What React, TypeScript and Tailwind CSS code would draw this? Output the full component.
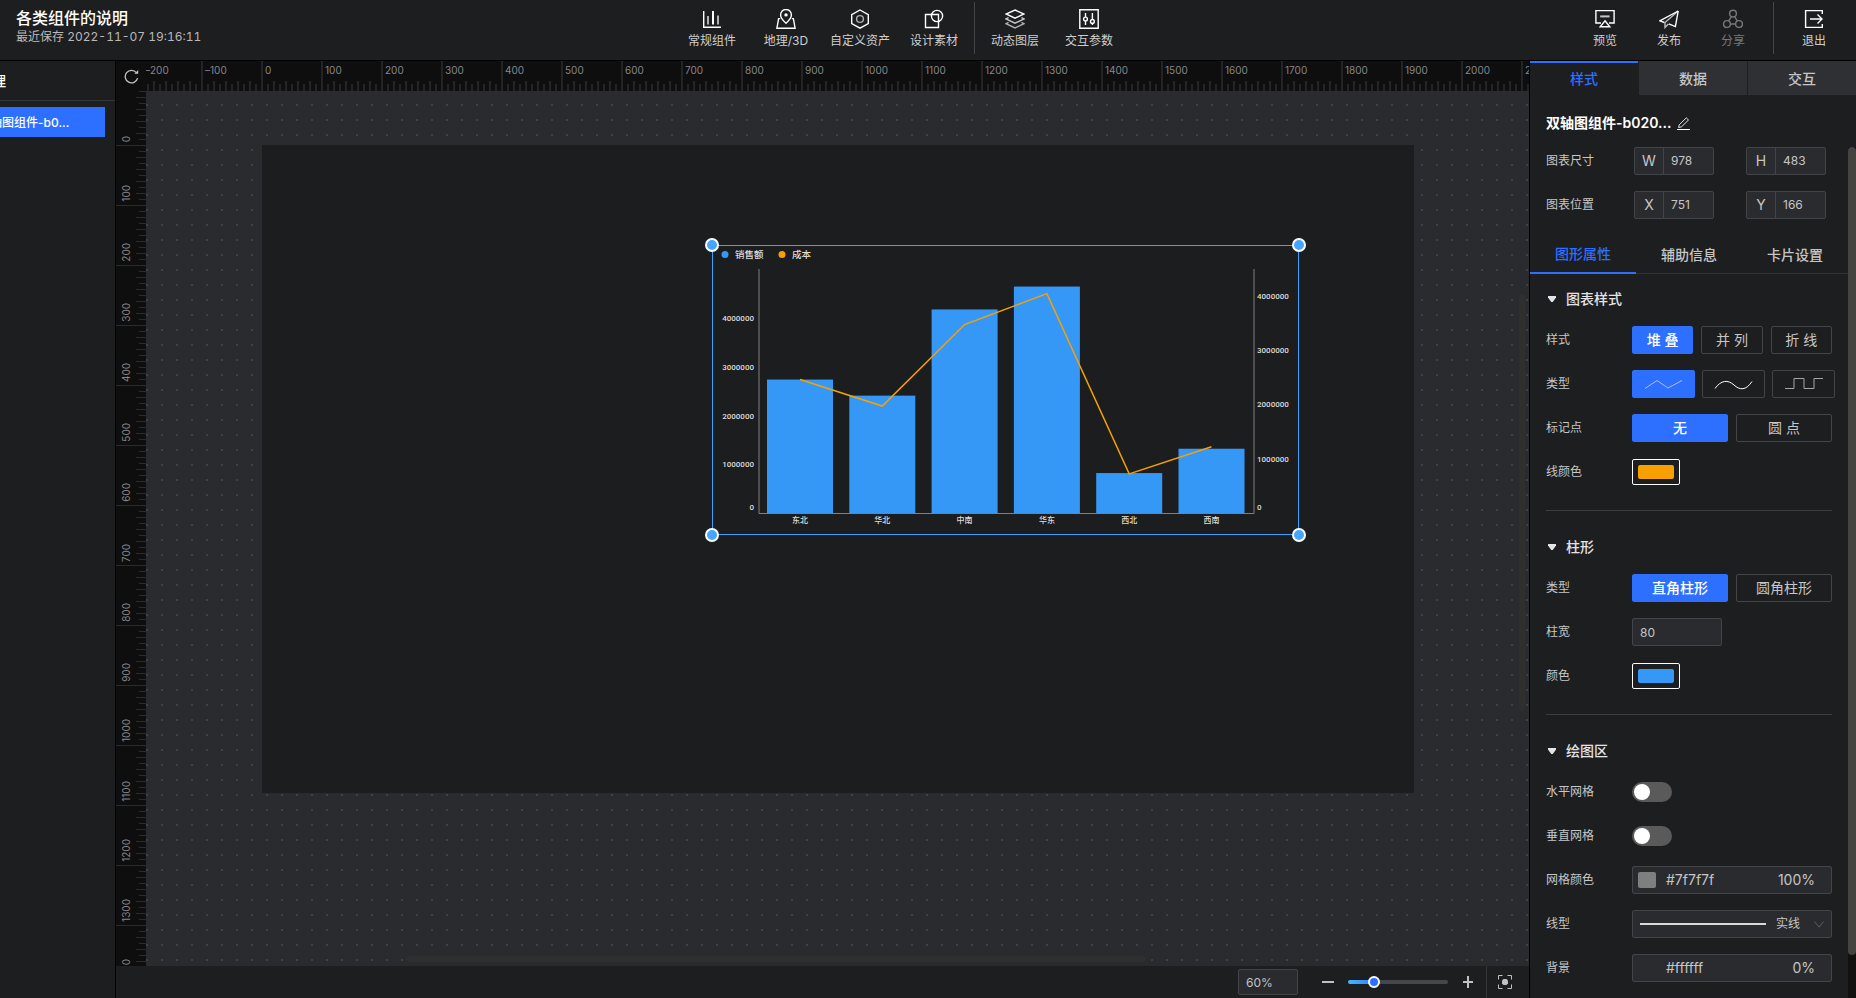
import { useState } from 'react';
import type { ReactNode } from 'react';
import clsx from 'clsx';

const CATEGORIES = ['东北', '华北', '中南', '华东', '西北', '西南'];
const SALES = [2740000, 2410000, 4180000, 4650000, 820000, 1320000];
const COST = [2460000, 1970000, 3470000, 4040000, 720000, 1220000];

/* ---------- icons ---------- */

const Icon = ({ children }: { children: ReactNode }) => (
    <svg width="20" height="20" viewBox="0 0 20 20" fill="none" stroke="currentColor" strokeWidth="1.4" aria-hidden="true">
        {children}
    </svg>
);

const BarsIcon = () => (
    <Icon>
        <path d="M1.7 2v16.3H19" />
        <path d="M6 7v8.5M16 6.5v9" strokeOpacity="0.65" strokeWidth="2" />
        <path d="M11 2v13.5" strokeWidth="2" />
    </Icon>
);

const MapIcon = () => (
    <Icon>
        <path d="M10 14.2C6.5 11 4.6 8.6 4.6 5.9a5.4 5.4 0 0 1 10.8 0c0 2.7-1.9 5.1-5.4 8.3z" />
        <circle cx="10" cy="5.9" r="1.7" fill="currentColor" stroke="none" />
        <path d="M4.2 9.6H2.6L.9 19.2h18.2l-1.7-9.6h-1.6" />
    </Icon>
);

const HexIcon = () => (
    <Icon>
        <path d="M10 1l8.3 4.6v9L10 19.2l-8.3-4.6v-9z" />
        <circle cx="10" cy="10" r="3.4" strokeOpacity="0.65" />
    </Icon>
);

const ShapesIcon = () => (
    <Icon>
        <path d="M1.5 5.5h13v13h-13z" />
        <circle cx="13" cy="7" r="5.6" />
    </Icon>
);

const LayersIcon = () => (
    <Icon>
        <path d="M10 1l9 4-9 4.2L1 5z" />
        <path d="M3.6 8.6L1 9.9l9 4.3 9-4.3-2.6-1.3" strokeOpacity="0.75" />
        <path d="M3.6 13.4L1 14.7 10 19l9-4.3-2.6-1.3" strokeOpacity="0.65" />
    </Icon>
);

const SlidersIcon = () => (
    <Icon>
        <path d="M.8.8h18.4v18.4H.8z" />
        <path d="M6.5 4v4M6.5 12v4M13.4 4v6.5M13.4 14.5V16" />
        <circle cx="6.5" cy="10" r="1.9" />
        <circle cx="13.4" cy="12.4" r="1.9" />
    </Icon>
);

const PreviewIcon = () => (
    <Icon>
        <path d="M6 14H.9V1.6h18.2V14H14" />
        <path d="M5.2 7.4h9.4" strokeOpacity="0.75" strokeWidth="2" />
        <path d="M10 11.8l4.8 6H5.2z" />
    </Icon>
);

const PlaneIcon = () => (
    <Icon>
        <path d="M19.2 2L.8 11.8l4.6 1.7M19.2 2l-2.8 15.6-6.6-2.8" />
        <path d="M19.2 2L6 13.500v5l3.400-3.400" strokeOpacity="0.7" />
    </Icon>
);

const ShareIcon = () => (
    <Icon>
        <circle cx="10" cy="4.6" r="3.4" />
        <circle cx="4" cy="15" r="3.4" />
        <circle cx="16" cy="15" r="3.4" />
        <path d="M8.3 7.8l-2.6 4.1M11.7 7.8l2.6 4.1M7.4 15h5.2" />
    </Icon>
);

const ExitIcon = () => (
    <Icon>
        <path d="M18.3 5V1.6H1.6v16.8h16.7V15" />
        <path d="M6 10h12M13.5 5.6L18 10l-4.5 4.4" />
    </Icon>
);

/* ---------- header ---------- */

const TOOLS = [
    { label: '常规组件', icon: <BarsIcon /> },
    { label: '地理/3D', icon: <MapIcon /> },
    { label: '自定义资产', icon: <HexIcon /> },
    { label: '设计素材', icon: <ShapesIcon /> },
];

const TOOLS_EXTRA = [
    { label: '动态图层', icon: <LayersIcon /> },
    { label: '交互参数', icon: <SlidersIcon /> },
];

type ToolProps = { label: string; icon: ReactNode; narrow?: boolean; disabled?: boolean };

const ToolButton = ({ label, icon, narrow, disabled }: ToolProps) => (
    <button
        disabled={disabled}
        className={clsx(
            'flex flex-col items-center gap-1 pt-[9px] text-xs leading-4',
            narrow ? 'w-16' : 'w-[74px]',
            disabled ? 'text-[#77787a]' : 'text-white'
        )}
    >
        {icon}
        <span className={clsx('whitespace-nowrap', !disabled && 'text-[#cececf]')}>{label}</span>
    </button>
);

const Header = () => (
    <header className="flex h-[61px] shrink-0 justify-between border-b border-black bg-[#1d1e20] pr-[10px] pl-4">
        <div className="w-[212px] pt-2">
            <h1 className="text-base leading-5 font-medium text-white">各类组件的说明</h1>
            <p className="mt-px text-xs leading-4 text-[#b9b9ba] tabular-nums">最近保存 2022-11-07 19:16:11</p>
        </div>
        <nav className="flex">
            {TOOLS.map((t) => <ToolButton key={t.label} {...t} />)}
            <div className="mx-[3px] mt-[2px] mb-[6px] w-px bg-[#434447]"></div>
            {TOOLS_EXTRA.map((t) => <ToolButton key={t.label} {...t} />)}
        </nav>
        <div className="flex">
            <ToolButton label="预览" icon={<PreviewIcon />} narrow />
            <ToolButton label="发布" icon={<PlaneIcon />} narrow />
            <ToolButton label="分享" icon={<ShareIcon />} narrow disabled />
            <div className="mx-2 mt-[2px] mb-[6px] w-px bg-[#434447]"></div>
            <ToolButton label="退出" icon={<ExitIcon />} narrow />
        </div>
    </header>
);

/* ---------- layer list ---------- */

const LayerPanel = () => (
    <aside className="w-[116px] shrink-0 overflow-hidden border-r border-black bg-[#1d1e20]">
        <div className="-ml-[84px] w-[199px]">
            <h2 className="flex h-10 items-center border-b border-[#35363a] pl-[34px] text-sm font-medium text-white">图层管理</h2>
            <button className="mt-[6px] flex h-[30px] w-[189px] items-center bg-[#2d70ff] pt-[2px] pl-[62px] text-xs font-medium whitespace-nowrap text-white">
                双轴图组件-b0...
            </button>
        </div>
    </aside>
);

/* ---------- rulers ---------- */

const MINOR = [1, 2, 3, 4, 5, 6, 7, 8, 9];

const TopRuler = () => (
    <div className="h-[30px] min-w-0 flex-1 overflow-hidden">
        <div className="-ml-[5px] flex">
            {Array.from({ length: 24 }, (_, i) => (i - 2) * 100).map((v) => (
                <div key={v} className="flex h-[30px] w-[60px] shrink-0 flex-col justify-between border-l-2 border-[#242426]">
                    <span className="pt-px pl-[2px] text-[10px] leading-4 text-[#85868b]">{v < 0 ? `–${-v}` : v}</span>
                    <div className="flex items-end pl-1">
                        {MINOR.map((m) => (
                            <span key={m} className={clsx('w-[6px] border-l-2 border-[#242426]', m % 2 ? 'h-[7px]' : 'h-[10px]')}></span>
                        ))}
                    </div>
                </div>
            ))}
        </div>
    </div>
);

const SideRuler = () => (
    <div className="w-[30px] shrink-0 overflow-hidden">
        <div className="-mt-[6px]">
            {Array.from({ length: 15 }, (_, i) => i * 100).map((v) => (
                <div key={v} className="flex h-[60px] items-end justify-between border-t border-[#2b2b2d]">
                    <span className="rotate-180 pt-[3px] pr-[2px] text-[10px] leading-4 text-[#85868b] [writing-mode:vertical-rl]">{v}</span>
                    <div className="flex flex-col items-end">
                        {MINOR.map((m) => (
                            <span key={m} className={clsx('h-[6px] border-t border-[#2b2b2d]', m % 2 ? 'w-[7px]' : 'w-[10px]')}></span>
                        ))}
                    </div>
                </div>
            ))}
        </div>
    </div>
);

/* ---------- chart ---------- */

const BASE = 268;
const LEFT_UNIT = 48.7 / 1000000;
const RIGHT_UNIT = 54.3 / 1000000;
const barX = (i: number) => 55 + i * 82.3;
const TICKS = [0, 1000000, 2000000, 3000000, 4000000];

const DualAxisChart = () => {
    const line = COST.map((v, i) => `${barX(i) + 33},${BASE - v * RIGHT_UNIT}`).join(' ');
    return (
        <svg
            viewBox="0 0 587 290"
            className="block size-full font-['Roboto','Noto_Sans_CJK_SC',sans-serif]"
            fill="#dcdcdc"
            fontSize="8"
            fontWeight="500"
            role="img"
            aria-label="销售额 成本"
        >
            <circle cx="13" cy="9.5" r="3.5" fill="#3598f7" />
            <text x="23" y="13" fontSize="9.5">销售额</text>
            <circle cx="70" cy="9.5" r="3.5" fill="#f8a000" />
            <text x="80" y="13" fontSize="9.5">成本</text>

            {SALES.map((v, i) => (
                <rect key={i} x={barX(i)} y={BASE - v * LEFT_UNIT} width="66" height={v * LEFT_UNIT} fill="#3598f7" />
            ))}
            <path d="M47 24V268.5H542V24" fill="none" stroke="#808080" />
            <polyline points={line} fill="none" stroke="#f8a000" strokeWidth="1.5" />

            {TICKS.map((t) => (
                <text key={t} x="42" y={t ? BASE - t * LEFT_UNIT + 3 : 265} textAnchor="end">{t}</text>
            ))}
            {TICKS.map((t) => (
                <text key={t} x="545" y={t ? BASE - t * RIGHT_UNIT + 3 : 265}>{t}</text>
            ))}
            {CATEGORIES.map((c, i) => (
                <text key={c} x={barX(i) + 33} y="278" textAnchor="middle">{c}</text>
            ))}
        </svg>
    );
};

const HANDLE = 'absolute size-[14px] rounded-full border-2 border-white bg-[#45a5ff]';

const Canvas = () => (
    <div className="relative min-w-0 flex-1 overflow-hidden bg-[#2a2b2f] bg-[conic-gradient(at_2px_2px,transparent_75%,#404145_0)] bg-[size:15px_15px] bg-[position:0_13px]">
        {/* artboard, 1920x1080 shown at 60% */}
        <div className="absolute top-[54px] left-[116px] h-[648px] w-[1152px] bg-[#1c1d1e]">
            <div className="absolute top-[100px] left-[450px] h-[290px] w-[587px] ring-1 ring-[#409eff] ring-inset">
                <DualAxisChart />
                <span className={clsx(HANDLE, '-top-[7px] -left-[7px]')}></span>
                <span className={clsx(HANDLE, '-top-[7px] -right-[7px]')}></span>
                <span className={clsx(HANDLE, '-bottom-[7px] -left-[7px]')}></span>
                <span className={clsx(HANDLE, '-right-[7px] -bottom-[7px]')}></span>
            </div>
        </div>
        {/* scroll thumbs */}
        <div className="absolute top-[203px] right-1 h-[417px] w-[6px] rounded-full bg-[#2f2f2f]"></div>
        <div className="absolute bottom-1 left-[260px] h-[6px] w-[740px] rounded-full bg-[#2f2f2f]"></div>
    </div>
);

const ZoomBar = () => (
    <footer className="flex h-8 shrink-0 items-center justify-end bg-[#1d1e20] text-[#c2c2c3]">
        <input
            aria-label="缩放比例"
            defaultValue="60%"
            className="h-[26px] w-[60px] rounded-[2px] border border-[#434447] bg-[#2a2b2f] px-[7px] text-xs outline-none"
        />
        <button aria-label="缩小" className="ml-[23px]">
            <svg width="14" height="14" viewBox="0 0 14 14" stroke="currentColor" strokeWidth="2"><path d="M1 7h12" /></svg>
        </button>
        <input
            type="range"
            aria-label="缩放"
            min={0}
            max={100}
            defaultValue={23}
            className="mx-[13px] h-1 w-[100px] appearance-none rounded-full bg-[linear-gradient(90deg,#42b8ff,#3080ff_26px,#46474d_26px)] [&::-webkit-slider-thumb]:size-3 [&::-webkit-slider-thumb]:appearance-none [&::-webkit-slider-thumb]:rounded-full [&::-webkit-slider-thumb]:border-2 [&::-webkit-slider-thumb]:border-white [&::-webkit-slider-thumb]:bg-[#2d70ff]"
        />
        <button aria-label="放大">
            <svg width="14" height="14" viewBox="0 0 14 14" stroke="currentColor" strokeWidth="2"><path d="M2 7h10M7 1v12" /></svg>
        </button>
        <button aria-label="适应画布" className="ml-[11px] flex h-full w-[43px] items-center border-l border-[#35363a] pl-[11px]">
            <svg width="14" height="14" viewBox="0 0 14 14" fill="none" stroke="currentColor">
                <path d="M.5 4.5v-4h4M9.5.5h4v4M13.5 9.5v4h-4M4.5 13.5h-4v-4" />
                <path d="M5.5 4h3L10 5.5v3L8.5 10h-3L4 8.500v-3z" fill="currentColor" stroke="none" />
            </svg>
        </button>
    </footer>
);

/* ---------- property panel ---------- */

const SizeField = ({ name, value }: { name: string; value: string }) => (
    <label className="flex h-7 w-20 rounded-[2px] border border-[#434447] bg-[#2a2b2f]">
        <span className="flex w-[29px] shrink-0 items-center justify-center border-r border-[#434447] text-sm">{name}</span>
        <input defaultValue={value} className="w-full min-w-0 bg-transparent pl-[7px] text-xs outline-none" />
    </label>
);

const Row = ({ label, children }: { label: string; children: ReactNode }) => (
    <div className="flex h-7 items-center">
        <span className="w-[86px] shrink-0 text-xs">{label}</span>
        {children}
    </div>
);

const Section = ({ title, children }: { title: string; children: ReactNode }) => (
    <section>
        <h3 className="mb-[17px] flex h-5 items-center gap-[10px] pl-[2px] text-sm font-medium text-[#e4e4e4]">
            <svg width="8" height="6" viewBox="0 0 8 6" fill="currentColor"><path d="M0 0h8v1.500L4.800 6H3.200L0 1.500z" /></svg>
            {title}
        </h3>
        <div className="flex flex-col gap-4">{children}</div>
    </section>
);

const OPTION = 'flex h-7 items-center justify-center rounded-[2px] border text-sm';
const OPTION_ON = 'border-[#2d70ff] bg-[#2d70ff] font-medium text-white';
const OPTION_OFF = 'border-[#434447]';

const Options = ({ items }: { items: string[] }) => {
    const [active, setActive] = useState(0);
    return (
        <div className={clsx('grid w-[200px] gap-2', items.length === 3 ? 'grid-cols-3' : 'grid-cols-2')}>
            {items.map((item, i) => (
                <button key={item} onClick={() => setActive(i)} className={clsx(OPTION, active === i ? OPTION_ON : OPTION_OFF)}>
                    {item}
                </button>
            ))}
        </div>
    );
};

const LINE_SHAPES = [
    { name: '折线', color: '#a9bff0', path: 'M1 14.500L13 6.500l11 7.500 14-7.500' },
    { name: '曲线', color: '#ffffff', path: 'M1 14.500C7 6 14 5.500 20 11s12 5.500 18-3.500' },
    { name: '阶梯', color: '#a6a6a8', path: 'M1 14.500h9v-10h10v10h10v-10h9' },
];

const LineShapes = () => {
    const [active, setActive] = useState(0);
    return (
        <div className="flex gap-[7px]">
            {LINE_SHAPES.map((s, i) => (
                <button
                    key={s.name}
                    aria-label={s.name}
                    onClick={() => setActive(i)}
                    className={clsx(OPTION, 'w-[63px]', active === i ? OPTION_ON : OPTION_OFF)}
                >
                    <svg width="40" height="20" viewBox="0 0 40 20" fill="none" stroke={s.color}><path d={s.path} /></svg>
                </button>
            ))}
        </div>
    );
};

const Swatch = ({ label, color }: { label: string; color: string }) => (
    <input
        type="color"
        aria-label={label}
        defaultValue={color}
        className="h-[26px] w-12 appearance-none rounded-[2px] border border-white bg-transparent p-[5px] [&::-webkit-color-swatch]:rounded-[2px] [&::-webkit-color-swatch]:border-0 [&::-webkit-color-swatch-wrapper]:p-0"
    />
);

const Toggle = ({ label }: { label: string }) => (
    <input
        type="checkbox"
        role="switch"
        aria-label={label}
        className="flex h-5 w-10 appearance-none items-center rounded-full bg-[#5a5a5b] px-[2px] before:size-4 before:rounded-full before:bg-white checked:justify-end checked:bg-[#2d70ff]"
    />
);

const ColorField = ({ label, color, alpha, fill }: { label: string; color: string; alpha: string; fill?: string }) => (
    <div className="flex h-7 w-[200px] items-center rounded-[2px] border border-[#434447] bg-[#2a2b2f] pr-4 pl-[5px] text-sm">
        <span className="h-4 w-[18px] shrink-0 rounded-[2px]" style={{ backgroundColor: fill }}></span>
        <input aria-label={label} defaultValue={color} className="ml-[10px] w-full min-w-0 bg-transparent outline-none" />
        <input aria-label={`${label}透明度`} defaultValue={alpha} className="w-14 shrink-0 bg-transparent text-right outline-none" />
    </div>
);

const Divider = () => <hr className="mt-6 mb-[26px] border-[#3c3d40]" />;

const PANEL_TABS = ['样式', '数据', '交互'];
const SUB_TABS = ['图形属性', '辅助信息', '卡片设置'];

const PropertyPanel = () => {
    const [tab, setTab] = useState(0);
    const [subTab, setSubTab] = useState(0);

    return (
        <aside className="flex w-[327px] shrink-0 flex-col border-l border-black bg-[#1d1e20] text-[#c6c6c7]">
            <div className="grid h-[34px] shrink-0 grid-cols-3 gap-px">
                {PANEL_TABS.map((t, i) => (
                    <button
                        key={t}
                        onClick={() => setTab(i)}
                        className={clsx(
                            'border-t-2 text-sm font-medium',
                            tab === i ? 'border-[#2d70ff] text-[#2d70ff]' : 'border-[#2f3033] bg-[#2f3033]'
                        )}
                    >
                        {t}
                    </button>
                ))}
            </div>
            <div className="flex items-center gap-[6px] px-4 pt-4 pb-3">
                <h2 className="text-sm leading-6 font-semibold text-white">双轴图组件-b020...</h2>
                <button aria-label="重命名">
                    <svg width="13" height="13" viewBox="0 0 13 13" fill="none" stroke="#e6e6e6">
                        <path d="M0 12.500h13" stroke="#fff" />
                        <path d="M2.200 7.800L9.300.900l2.200 2.100-7 6.800-2.900.700z" />
                    </svg>
                </button>
            </div>

            <div className="flex min-h-0 flex-1">
                <div className="min-w-0 flex-1 overflow-hidden">
                    <div className="flex flex-col gap-4 px-4">
                        <Row label="图表尺寸">
                            <div className="flex gap-8 pl-[2px]">
                                <SizeField name="W" value="978" />
                                <SizeField name="H" value="483" />
                            </div>
                        </Row>
                        <Row label="图表位置">
                            <div className="flex gap-8 pl-[2px]">
                                <SizeField name="X" value="751" />
                                <SizeField name="Y" value="166" />
                            </div>
                        </Row>
                    </div>

                    <div className="mt-4 grid h-[39px] grid-cols-3">
                        {SUB_TABS.map((t, i) => (
                            <button
                                key={t}
                                onClick={() => setSubTab(i)}
                                className={clsx(
                                    'pt-px text-sm font-medium',
                                    subTab === i ? 'border-b-2 border-[#2d70ff] text-[#2d70ff]' : 'border-b border-[#303134]'
                                )}
                            >
                                {t}
                            </button>
                        ))}
                    </div>

                    <div className="px-4 pt-[15px]">
                        <Section title="图表样式">
                            <Row label="样式"><Options items={['堆 叠', '并 列', '折 线']} /></Row>
                            <Row label="类型"><LineShapes /></Row>
                            <Row label="标记点"><Options items={['无', '圆 点']} /></Row>
                            <Row label="线颜色"><Swatch label="线颜色" color="#f8a000" /></Row>
                        </Section>
                        <Divider />
                        <Section title="柱形">
                            <Row label="类型"><Options items={['直角柱形', '圆角柱形']} /></Row>
                            <Row label="柱宽">
                                <input
                                    aria-label="柱宽"
                                    defaultValue="80"
                                    className="h-7 w-[90px] rounded-[2px] border border-[#434447] bg-[#2a2b2f] px-[7px] text-xs outline-none"
                                />
                            </Row>
                            <Row label="颜色"><Swatch label="颜色" color="#3598f7" /></Row>
                        </Section>
                        <Divider />
                        <Section title="绘图区">
                            <Row label="水平网格"><Toggle label="水平网格" /></Row>
                            <Row label="垂直网格"><Toggle label="垂直网格" /></Row>
                            <Row label="网格颜色"><ColorField label="网格颜色" color="#7f7f7f" alpha="100%" fill="#7f7f7f" /></Row>
                            <Row label="线型">
                                <div className="flex h-7 w-[200px] items-center rounded-[2px] border border-[#434447] bg-[#2a2b2f] px-[7px]">
                                    <span className="h-[2px] w-[126px] bg-[#d9d9d6]"></span>
                                    <select aria-label="线型" className="ml-[10px] w-9 appearance-none bg-transparent text-xs outline-none">
                                        <option>实线</option>
                                    </select>
                                    <svg width="10" height="7" viewBox="0 0 10 7" fill="none" stroke="#5b5c60" className="ml-auto"><path d="M.5.500L5 6.200 9.500.500" /></svg>
                                </div>
                            </Row>
                            <Row label="背景"><ColorField label="背景" color="#ffffff" alpha="0%" /></Row>
                        </Section>
                    </div>
                </div>
                <div className="w-2 shrink-0 bg-[#13110f]">
                    <div className="h-[95%] rounded-full bg-[#454440]"></div>
                </div>
            </div>
        </aside>
    );
};

const App = () => (
    <div className="flex h-screen flex-col overflow-hidden bg-[#1d1e20] font-['Inter','Noto_Sans_CJK_SC',sans-serif]">
        <Header />
        <div className="flex min-h-0 flex-1">
            <LayerPanel />
            <main className="flex min-w-0 flex-1 flex-col">
                <div className="flex bg-[#0e0e0e]">
                    <button aria-label="重置标尺" className="flex size-[30px] shrink-0 items-center justify-center text-[#c4c4c4]">
                        <svg width="15" height="15" viewBox="0 0 15 15" fill="none" stroke="currentColor" strokeWidth="1.3">
                            <path d="M13.600 9.200A6.300 6.300 0 1 1 12.400 3.600" />
                            <path d="M10.300 4.700h3.900V1z" fill="currentColor" stroke="none" />
                        </svg>
                    </button>
                    <TopRuler />
                </div>
                <div className="flex min-h-0 flex-1 bg-[#0e0e0e]">
                    <SideRuler />
                    <Canvas />
                </div>
                <ZoomBar />
            </main>
            <PropertyPanel />
        </div>
    </div>
);

export default App;
